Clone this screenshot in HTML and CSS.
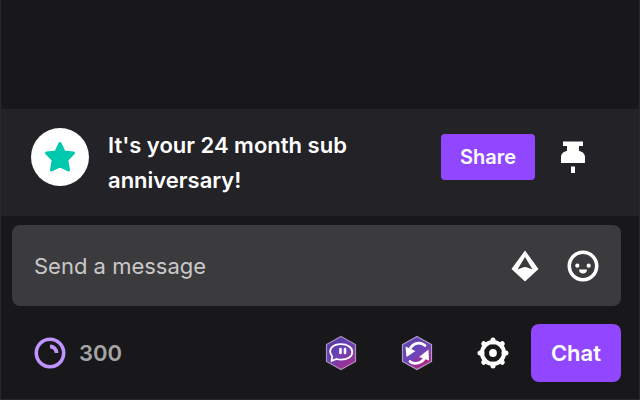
FILE: index.html
```
<!DOCTYPE html>
<html lang="en">
<head>
    <meta charset="UTF-8">
    <meta name="viewport" content="width=device-width, initial-scale=1.0">
    <title>Stream Chat</title>
    <link rel="stylesheet" href="styles.css">
</head>
<body>

    <main class="chat">
        <div class="messages"></div>

        <!-- Sub anniversary callout -->
        <section class="callout">
            <div class="badge">
                <svg width="32" height="32" viewBox="0 0 32 32">
                    <path d="M16 2.5 L20 11 L29.5 12 L22.8 19 L24.5 29 L16 24.8 L7.5 29 L9.2 19 L2.5 12 L12 11 Z" fill="#00c8af" stroke="#00c8af" stroke-width="3" stroke-linejoin="round"/>
                </svg>
            </div>
            <p class="callout-text">It's your 24 month sub anniversary!</p>
            <div class="callout-actions">
                <button class="share-btn" type="button">Share</button>
                <button class="icon-btn" type="button" aria-label="Pin">
                    <svg width="24" height="32" viewBox="0 0 24 32">
                        <path d="M2 0.5 H22 V5 H18 V10 C21.5 10.5 24 13 24 16 V22 H0 V16 C0 13 2.5 10.5 6 10 V5 H2 Z M10 25.5 H14 V32 H10 Z" fill="#fff"/>
                    </svg>
                </button>
            </div>
        </section>

        <form class="composer">
            <div class="message-box">
                <input class="message-input" type="text" placeholder="Send a message" aria-label="Send a message">
                <button class="icon-btn" type="button" aria-label="Bits">
                    <svg width="28" height="32" viewBox="0 0 28 32">
                        <path fill-rule="evenodd" d="M14 0.5 L27.5 19 L14 31.5 L0.5 19 Z M14 7 L6.5 19.5 L12.5 17.3 Q14 16.5 15.5 17.3 L21.5 19.5 Z" fill="#fff"/>
                    </svg>
                </button>
                <button class="icon-btn" type="button" aria-label="Emotes">
                    <svg width="32" height="32" viewBox="0 0 32 32">
                        <circle cx="16" cy="16" r="13.7" fill="none" stroke="#fff" stroke-width="3.6"/>
                        <circle cx="10.3" cy="15.7" r="2.1" fill="#fff"/>
                        <circle cx="21.7" cy="15.7" r="2.1" fill="#fff"/>
                        <path d="M12 19.5 H20 C20 22 18.4 23.6 16 23.6 C13.6 23.6 12 22 12 19.5 Z" fill="#fff"/>
                    </svg>
                </button>
            </div>

            <div class="toolbar">
                <button class="points-btn" type="button">
                    <svg width="32" height="32" viewBox="0 0 32 32" fill="none" stroke="#bf94ff">
                        <circle cx="16" cy="16" r="13.7" stroke-width="3.6"/>
                        <path d="M16 9.5 A6.5 6.5 0 0 1 22.5 16" stroke-width="3.8"/>
                    </svg>
                    <span>300</span>
                </button>
                <div class="tools">
                    <button class="icon-btn" type="button" aria-label="Chat extension">
                        <svg width="32" height="36" viewBox="0 0 32 36">
                            <defs>
                                <linearGradient id="hexChat" x1="0" y1="0" x2="0.6" y2="1">
                                    <stop offset="0" stop-color="#4b389f"/>
                                    <stop offset="0.6" stop-color="#6f42b5"/>
                                    <stop offset="1" stop-color="#a52c91"/>
                                </linearGradient>
                            </defs>
                            <path d="M16 1.5 L30.5 9.5 V26.5 L16 34.5 L1.5 26.5 V9.5 Z" fill="url(#hexChat)" stroke="#a991bd" stroke-width="1.2"/>
                            <path d="M7.2 21.5 C2.5 15.5 6.5 9.2 16 9.2 C22.8 9.2 27.3 12.5 27.3 17 C27.3 21.5 22.8 24.7 16 24.7 C14 24.7 12.5 24.4 11.3 24 L6.6 26 Z" fill="none" stroke="#fff" stroke-width="1.8" stroke-linejoin="round"/>
                            <path d="M15.5 14 V18 M20 14 V18" stroke="#fff" stroke-width="2.6" stroke-linecap="round"/>
                        </svg>
                    </button>
                    <button class="icon-btn" type="button" aria-label="Refresh extension">
                        <svg width="32" height="36" viewBox="0 0 32 36">
                            <defs>
                                <linearGradient id="hexSync" x1="0" y1="0" x2="0.6" y2="1">
                                    <stop offset="0" stop-color="#5a42ac"/>
                                    <stop offset="0.6" stop-color="#6d45b8"/>
                                    <stop offset="1" stop-color="#b52381"/>
                                </linearGradient>
                            </defs>
                            <path d="M16 1.5 L30.5 9.5 V26.5 L16 34.5 L1.5 26.5 V9.5 Z" fill="url(#hexSync)" stroke="#b09bca" stroke-width="1.2"/>
                            <path d="M9 14 C12 7.5 19.5 6.5 24 10.5" fill="none" stroke="#fff" stroke-width="2.8" stroke-linecap="round"/>
                            <path d="M4.5 11.5 L14.5 16 L5.5 22 Z" fill="#fff"/>
                            <path d="M9 26.5 C13 30 21.5 28.5 24 22" fill="none" stroke="#fff" stroke-width="2.8" stroke-linecap="round"/>
                            <path d="M27.5 14.5 L18 22 L28 25.5 Z" fill="#fff"/>
                        </svg>
                    </button>
                    <button class="icon-btn" type="button" aria-label="Chat settings">
                        <svg width="32" height="32" viewBox="0 0 32 32">
                            <circle cx="16" cy="16" r="11" fill="none" stroke="#fff" stroke-width="4"/>
                            <circle cx="16" cy="16" r="3.9" fill="#fff"/>
                            <path d="M16 3 V5 M16 27 V29 M3 16 H5 M27 16 H29 M6.7 6.7 L8 8 M24 24 L25.3 25.3 M25.3 6.7 L24 8 M8 24 L6.7 25.3" stroke="#fff" stroke-width="5" stroke-linecap="round"/>
                        </svg>
                    </button>
                    <button class="chat-btn" type="submit">Chat</button>
                </div>
            </div>
        </form>
    </main>

</body>
</html>
```
FILE: styles.css
```
* {
    box-sizing: border-box;
}

body {
    margin: 0;
    background-color: #18181a;
    color: #fff;
    font-family: Inter, "Liberation Sans", sans-serif;
    font-size: 22px;
}

button {
    border: none;
    padding: 0;
    color: inherit;
    font-family: inherit;
    cursor: pointer;
}

svg {
    display: block;
}

.chat {
    display: flex;
    flex-direction: column;
    min-height: 100vh;
    border: 1px solid #29292d;
    border-top: none;
}

.messages {
    flex: 1;
}

.callout {
    display: flex;
    align-items: flex-start;
    padding: 19px 54px 18px 30px;
    background-color: #232227;
}

.badge {
    display: flex;
    flex-shrink: 0;
    align-items: center;
    justify-content: center;
    width: 58px;
    height: 58px;
    margin-right: 19px;
    border-radius: 50%;
    background-color: #fff;
}

.callout-text {
    flex: 1;
    max-width: 260px;
    margin: 0 auto 0 0;
    font-weight: 600;
    line-height: 35px;
}

.callout-actions {
    display: flex;
    align-items: center;
    gap: 26px;
    height: 58px;
}

.share-btn {
    height: 46px;
    padding: 0 19px;
    border-radius: 4px;
    background-color: #9147ff;
    font-size: 20px;
    font-weight: 600;
}

.icon-btn {
    background: none;
}

.composer {
    padding: 9px 18px 17px 11px;
}

.message-box {
    display: flex;
    align-items: center;
    gap: 28px;
    height: 81px;
    padding: 0 22px;
    border-radius: 8px;
    background-color: #3b3b3d;
}

.message-input {
    flex: 1;
    min-width: 0;
    height: 100%;
    padding: 0;
    border: none;
    outline: none;
    background: none;
    color: #fff;
    font-family: inherit;
    font-size: 22px;
}

.message-input::placeholder {
    color: #c8c8c9;
}

.toolbar {
    display: flex;
    align-items: center;
    justify-content: space-between;
    margin-top: 18px;
    padding-left: 22px;
}

.points-btn {
    display: flex;
    align-items: center;
    gap: 13px;
    background: none;
    color: #a5a5a6;
    font-size: 22px;
    font-weight: 600;
}

.tools {
    display: flex;
    align-items: center;
    gap: 44px;
}

.chat-btn {
    height: 58px;
    margin-left: -22px;
    padding: 0 20px;
    border-radius: 8px;
    background-color: #9147ff;
    font-size: 22px;
    font-weight: 600;
}
```
